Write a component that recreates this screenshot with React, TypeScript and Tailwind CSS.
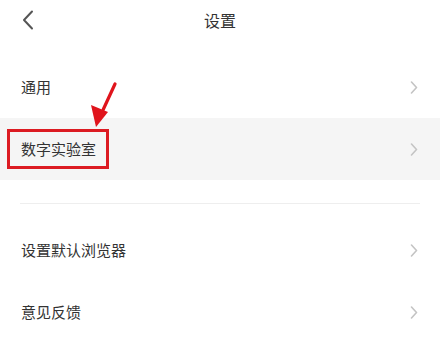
import React from "react";

const Chevron = () => (
  <svg width="8" height="13" viewBox="0 0 8 13" className="shrink-0">
    <path d="M1.5 1 L6.5 6.5 L1.5 12" fill="none" stroke="#c4c4c4" strokeWidth="1.6" strokeLinecap="round" strokeLinejoin="round" />
  </svg>
);

const Row = ({ label, gray, boxed }: { label: string; gray?: boolean; boxed?: boolean }) => (
  <div className={`relative flex h-[62px] items-center justify-between pl-[21px] pr-[22px] ${gray ? "bg-[#f5f5f5]" : "bg-white"}`}>
    <span className="-mt-[2px] text-[15px] leading-none text-[#333]">{label}</span>
    <Chevron />
    {boxed && (
      <div className="absolute left-[7px] top-[11px] h-[40px] w-[102px] border-[3px] border-[#dc1b22]" />
    )}
  </div>
);

export default function App() {
  return (
    <div
      className="relative h-[340px] w-[440px] overflow-hidden bg-white"
      style={{ fontFamily: '"Noto Sans CJK SC", "Noto Sans", sans-serif' }}
    >
      <div className="relative flex h-[42px] items-center justify-center">
        <svg width="12" height="20" viewBox="0 0 12 20" className="absolute left-[22px] top-[10px]">
          <path d="M10 1.5 L2 10 L10 18.5" fill="none" stroke="#555" strokeWidth="2" strokeLinecap="round" strokeLinejoin="round" />
        </svg>
        <span className="-mt-[2px] text-[16px] leading-none text-[#333]">设置</span>
      </div>
      <div className="h-[14px]" />
      <Row label="通用" />
      <Row label="数字实验室" gray boxed />
      <div className="h-[23px]" />
      <div className="mx-[20px] h-px bg-[#eeeeee]" />
      <div className="h-[15px]" />
      <Row label="设置默认浏览器" />
      <Row label="意见反馈" />
      <svg width="40" height="50" viewBox="0 0 40 50" className="absolute left-[86px] top-[80px]">
        <line x1="29" y1="4" x2="17" y2="30" stroke="#e0141c" strokeWidth="3.2" strokeLinecap="round" />
        <polygon points="10,47 5,25 22,32" fill="#e0141c" />
      </svg>
    </div>
  );
}
